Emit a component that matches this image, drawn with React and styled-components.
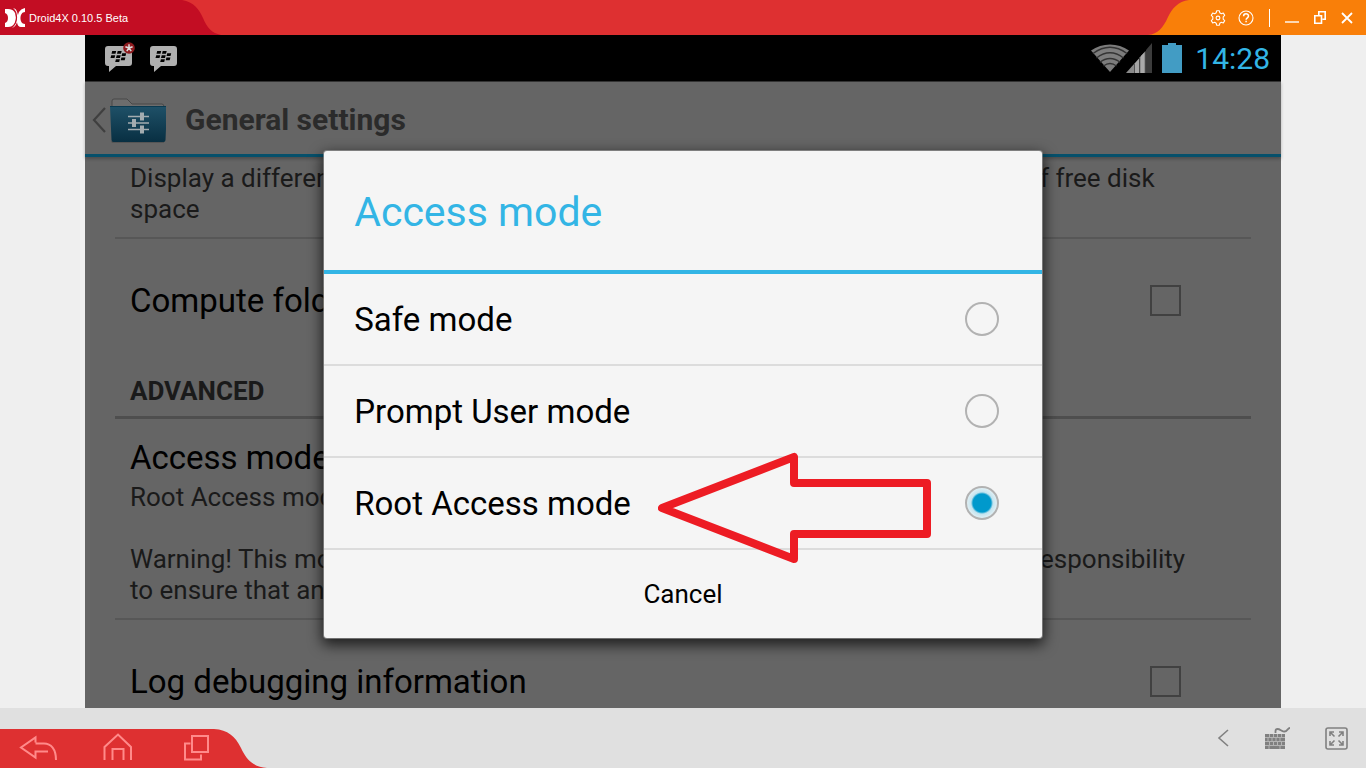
import React, { useState } from "react";
import styled, { createGlobalStyle } from "styled-components";

const colors = {
    crimson: "#c30d23",
    red: "#de3031",
    orange: "#f97f09",
    holo: "#33b5e5",
    dimmed: "#656565",
    bar: "#e0e0e0",
    navIcon: "#ff8a8a",
    toolIcon: "#808080",
};

const accessModes = ["Safe mode", "Prompt User mode", "Root Access mode"];

export default function App() {
    return (
        <Page>
            <GlobalStyle />
            <TitleBar />
            <Stage>
                <Screen>
                    <StatusBar />
                    <SettingsScreen />
                </Screen>
            </Stage>
            <BottomBar />
        </Page>
    )
}

function TitleBar() {
    return (
        <TitleBarWrapper>
            <AppTitle>
                <DroidLogo />
                <h1>Droid4X 0.10.5 Beta</h1>
            </AppTitle>
            <Curve width="40" height="35" viewBox="0 0 40 35">
                <path d="M0 0h1c12 2 17 9 21 18 4 10 9 15 18 17H0z" fill={colors.crimson} />
            </Curve>
            <Spacer />
            <Curve width="42" height="35" viewBox="0 0 42 35">
                <path d="M42 0h-1C30 1 24 9 20 17 15 28 10 34 0 35h42z" fill={colors.orange} />
            </Curve>
            <WindowControls>
                <WindowButton aria-label="Settings">
                    <svg width="16" height="16" viewBox="0 0 16 16" fill="none" stroke="#fff" strokeWidth="1.1">
                        <path d="M6.6.8h2.8l.4 2 1.5.9 2-.7 1.4 2.4-1.5 1.4v2.4l1.5 1.4-1.4 2.4-2-.7-1.5.9-.4 2H6.6l-.4-2-1.5-.9-2 .7-1.4-2.4 1.5-1.4V6.8L1.3 5.4 2.7 3l2 .7 1.5-.9z" strokeLinejoin="round" />
                        <circle cx="8" cy="8" r="1.9" />
                    </svg>
                </WindowButton>
                <WindowButton aria-label="Help">
                    <svg width="16" height="16" viewBox="0 0 16 16" fill="none" stroke="#fff">
                        <circle cx="8" cy="8" r="7" strokeWidth="1.1" />
                        <path d="M5.6 6.2c0-3.2 4.9-3.2 4.9-.2 0 1.8-2.4 1.8-2.4 3.8M8.1 10.8v1.4" strokeWidth="1.5" />
                    </svg>
                </WindowButton>
                <ControlDivider />
                <WindowButton aria-label="Minimize">
                    <svg width="16" height="16" viewBox="0 0 16 16">
                        <path d="M1 12h14" stroke="#fff" strokeWidth="1.4" />
                    </svg>
                </WindowButton>
                <WindowButton aria-label="Restore">
                    <svg width="16" height="16" viewBox="0 0 16 16" fill="none" stroke="#fff" strokeWidth="1.6">
                        <path d="M6.800 5V1.800h6.400v7.400H10.500M2.800 5.800h6.700v7.400H2.800z" />
                    </svg>
                </WindowButton>
                <WindowButton aria-label="Close">
                    <svg width="16" height="16" viewBox="0 0 16 16">
                        <path d="M2 3l10 10M12 3L2 13" stroke="#fff" strokeWidth="1.8" />
                    </svg>
                </WindowButton>
            </WindowControls>
        </TitleBarWrapper>
    )
}

function DroidLogo() {
    return (
        <svg width="20" height="20" viewBox="0 0 20 20" fill="#fff">
            <path d="M0 1h3c6 0 8 4 8 9s-2 9-8 9H0v-4c4-1 4-9 0-10z" />
            <path d="M8 0c4 1 4 4 5 7 1-4 3-6 7-7v4c-6 0-6 12 0 12v3h-4c-2 0-4-2-4-5-1 3-2 5-5 6 6-5 6-12 1-20z" />
            <path d="M7 0c6 4 6 14 0 19" fill="none" stroke={colors.crimson} strokeWidth="1.200" />
        </svg>
    )
}

function BbmIcon({ alert }) {
    return (
        <svg width="30" height="32" viewBox="0 0 30 32">
            <path d="M3 4h21q3 0 3 3v14q0 3-3 3H11l-7 6V24H3q-3 0-3-3V7q0-3 3-3z" fill="#b0b0b0" />
            <path d="M7.200 9h4l-.7 2.800h-4zM12.700 9h4l-.7 2.800h-4zM6.200 13.200h4l-.7 2.800h-4zM11.700 13.200h4l-.7 2.800h-4zM17.200 11.200h4l-.7 2.800h-4zM16.400 15.400h4l-.7 2.800h-4zM10.900 17.200h4l-.7 2.800h-4z" fill="#000" />
            {alert && (
                <g>
                    <circle cx="24" cy="6" r="5.800" fill="#8e1a1e" />
                    <path d="M24 6V2.200M24 6l3.600-1.200M24 6l2.200 3.200M24 6l-2.200 3.200M24 6l-3.600-1.200" stroke="#ddd" strokeWidth="1.500" />
                </g>
            )}
        </svg>
    )
}

function StatusBar() {
    return (
        <StatusBarWrapper>
            <Notifications>
                <BbmIcon alert />
                <BbmIcon />
            </Notifications>
            <Indicators>
                <svg width="62" height="30" viewBox="0 0 62 30">
                    <path d="M0 7.500C11-.500 27-.500 38 7.500L19 29z" fill="#7c7c7c" />
                    <path d="M2 10.500c11-8 23-8 34 0M5.500 15c9-7 18-7 27 0M9 19.200c6-5 14-5 20 0M12.500 23c4-3 9-3 13 0" fill="none" stroke="#333" strokeWidth="1.400" />
                    <path d="M35 30L43 21v9z" fill="#8a8a8a" />
                    <path d="M43.500 20.500l4.500-5V30h-4.500z" fill="#a5a5a5" />
                    <path d="M48.500 14.500l6-6.500v22h-6z" fill="#8f8f8f" />
                    <path d="M50 13l3-3v20h-3z" fill="#aaa" />
                    <path d="M55 7l6-7v30h-6z" fill="#3c3c3c" />
                </svg>
                <svg width="20" height="30" viewBox="0 0 20 30">
                    <path d="M6 0h8v2h6v28H0V2h6z" fill="#429cc4" />
                </svg>
                <Clock>14:28</Clock>
            </Indicators>
        </StatusBarWrapper>
    )
}

function SettingsScreen() {
    return (
        <Content>
            <ActionBar>
                <svg width="14" height="26" viewBox="0 0 14 26">
                    <path d="M13 1L2 13l11 12" fill="none" stroke="#3f3f3f" strokeWidth="2.200" />
                </svg>
                <FolderIcon />
                <h2>General settings</h2>
            </ActionBar>
            <SettingsList>
                <SettingItem $scrolled>
                    <SettingName>Disk images</SettingName>
                    <SettingText>
                        Display a different disk icon in this folder list depending on the actual amount of free disk space
                    </SettingText>
                </SettingItem>
                <CheckItem>
                    <span>Compute folder size</span>
                    <CheckBox />
                </CheckItem>
                <SectionHeader>ADVANCED</SectionHeader>
                <SettingItem>
                    <SettingName>Access mode</SettingName>
                    <SettingText>Root Access mode</SettingText>
                    <SettingText $spaced>
                        Warning! This mode may damage important files on the system. It will be your responsibility
                        to ensure that any changes are safe.
                    </SettingText>
                </SettingItem>
                <CheckItem>
                    <span>Log debugging information</span>
                    <CheckBox />
                </CheckItem>
            </SettingsList>
            <Overlay>
                <AccessDialog />
            </Overlay>
        </Content>
    )
}

function FolderIcon() {
    return (
        <svg width="60" height="48" viewBox="0 0 60 48">
            <defs>
                <linearGradient id="folder" x1="0" y1="0" x2="0" y2="1">
                    <stop offset="0" stopColor="#1f5168" />
                    <stop offset="1" stopColor="#082f42" />
                </linearGradient>
            </defs>
            <path d="M6 11V5q0-2 2-2h13l5 5h30q2 0 2 3" fill="#6d6d6d" stroke="#484848" />
            <path d="M5 45h53v2H6z" fill="#555" />
            <path d="M4 10h57l-1.500 34q0 2-2 2h-50q-2 0-2-2z" fill="url(#folder)" />
            <path d="M4 10.500h57" stroke="#0b3a50" />
            <path d="M22 20.500h21M22 27h21M22 33.500h21" stroke="#a3acb0" strokeWidth="1.500" />
            <path d="M36 16.500v8M28 23v8M36 29.500v8" stroke="#a3acb0" strokeWidth="4" />
        </svg>
    )
}

function AccessDialog() {
    const [mode, setMode] = useState("Root Access mode");

    return (
        <Dialog role="dialog" aria-labelledby="dialog-title">
            <DialogTitle id="dialog-title">Access mode</DialogTitle>
            {accessModes.map(name => (
                <Option key={name}>
                    <span>{name}</span>
                    <Radio name="access" checked={mode === name} onChange={() => setMode(name)} />
                </Option>
            ))}
            <CancelButton>Cancel</CancelButton>
            <Pointer width="274" height="112" viewBox="0 0 274 112">
                <path d="M4 56L136 5v26h133v51H136v25z" fill="none" stroke="#ed1c24" strokeWidth="8" strokeLinejoin="round" />
            </Pointer>
        </Dialog>
    )
}

function BottomBar() {
    return (
        <BottomBarWrapper>
            <NavTab>
                <NavButton aria-label="Back">
                    <svg width="38" height="28" viewBox="0 0 38 28">
                        <path d="M16.500 9.500V4.500L2 14.500l14.500 10V18.500H29M16.500 10.500H25C32 10.500 37 16 37 27" />
                    </svg>
                </NavButton>
                <NavButton aria-label="Home">
                    <svg width="30" height="28" viewBox="0 0 30 28">
                        <path d="M2.500 27V14L16 1.500 29 14V27M10.500 27V16h11v11" />
                    </svg>
                </NavButton>
                <NavButton aria-label="Recent apps">
                    <svg width="26" height="28" viewBox="0 0 26 28">
                        <path d="M9 3h16v16H9zM7.500 10.500H2v16h16v-5" />
                    </svg>
                </NavButton>
            </NavTab>
            <Curve width="53" height="39" viewBox="0 0 53 39">
                <path d="M0 0c14 1 21 7 27 19 5 11 12 19 26 20H0z" fill={colors.red} />
            </Curve>
            <Spacer />
            <Tools>
                <ToolButton aria-label="Collapse">
                    <svg width="12" height="18" viewBox="0 0 12 18" fill="none" stroke={colors.toolIcon} strokeWidth="1.600">
                        <path d="M11 1L2 9l9 8" />
                    </svg>
                </ToolButton>
                <ToolButton aria-label="Keyboard">
                    <svg width="26" height="22" viewBox="0 0 26 22">
                        <path d="M11.500 6V4q0-2 2-2c3 0 4 3 7 2.500 3 0 3-3.500 5.500-3.500" fill="none" stroke={colors.toolIcon} strokeWidth="1.800" />
                        <path d="M1 7h20v15H1z" fill={colors.toolIcon} />
                        <path d="M1 10.500h20M1 14.500h20M1 18.500h20M5.500 7v3M9.500 7v3M13.500 7v3M17.500 7v3M4 11v3M8 11v3M12 11v3M16 11v3M5.500 15v3M9.500 15v3M13.500 15v3M17.500 15v3M5 19v3M16 19v3" stroke="#b4b4b4" strokeWidth="1" />
                    </svg>
                </ToolButton>
                <ToolButton aria-label="Full screen">
                    <svg width="23" height="23" viewBox="0 0 23 23" fill="none" stroke={colors.toolIcon}>
                        <rect x="1" y="1" width="21" height="21" rx="2" strokeWidth="1.600" />
                        <path d="M9.500 9.500l-4-4M5 9V5h4M13.500 9.500l4-4M14 5h4v4M9.500 13.500l-4 4M5 14v4h4M13.500 13.500l4 4M14 18h4v-4" strokeWidth="1.600" />
                    </svg>
                </ToolButton>
            </Tools>
        </BottomBarWrapper>
    )
}

const GlobalStyle = createGlobalStyle`
* {
    box-sizing: border-box;
}

body, h1, h2, h3, p {
    margin: 0;
}

body {
    font-family: Roboto, sans-serif;
    background-color: #efefef;
}

button {
    padding: 0;
    border: 0;
    background: none;
    font-family: inherit;
    cursor: pointer;
}

svg {
    display: block;
    flex: none;
}
`

const Page = styled.div`
display: flex;
flex-direction: column;
height: 100vh;
overflow: hidden;
`

const Spacer = styled.div`
flex: 1;
`

const Curve = styled.svg``

const TitleBarWrapper = styled.header`
display: flex;
flex: none;
height: 35px;
background-color: ${colors.red};
`

const AppTitle = styled.div`
display: flex;
align-items: center;
gap: 4px;
width: 181px;
padding-left: 5px;
background-color: ${colors.crimson};
color: #fff;

h1 {
    font: 11px "Liberation Sans", sans-serif;
    white-space: nowrap;
}
`

const WindowControls = styled.div`
display: flex;
align-items: center;
gap: 12px;
padding: 0 10px 0 20px;
background-color: ${colors.orange};
`

const WindowButton = styled.button`
width: 16px;
height: 16px;
`

const ControlDivider = styled.div`
width: 1px;
height: 18px;
margin: 0 2px 0 3px;
background-color: #fff;
`

const Stage = styled.main`
display: flex;
flex: 1;
min-height: 0;
padding: 0 85px;
`

const Screen = styled.div`
display: flex;
flex-direction: column;
flex: 1;
background-color: ${colors.dimmed};
`

const StatusBarWrapper = styled.div`
display: flex;
flex: none;
align-items: center;
justify-content: space-between;
height: 46px;
padding: 0 11px 0 20px;
background-color: #000;
`

const Notifications = styled.div`
display: flex;
gap: 15px;
`

const Indicators = styled.div`
display: flex;
align-items: center;
gap: 9px;
`

const Clock = styled.time`
margin-left: 4px;
font-size: 30px;
color: ${colors.holo};
`

const Content = styled.section`
position: relative;
display: flex;
flex: 1;
flex-direction: column;
min-height: 0;
`

const ActionBar = styled.div`
display: flex;
flex: none;
align-items: center;
height: 76px;
padding: 3px 0 0 7px;
border-top: 1px solid #333;
border-bottom: 3px solid #06506b;
box-shadow: 0 2px 3px rgba(0, 0, 0, 0.25);

h2 {
    margin-left: 19px;
    font-size: 30px;
    font-weight: 700;
    color: #2b2b2b;
}
`

const SettingsList = styled.div`
flex: 1;
min-height: 0;
padding: 0 30px;
overflow: hidden;
`

const SettingItem = styled.div`
margin-top: ${props => props.$scrolled ? '-57px' : '0'};
padding: 19px 45px 12px 15px;
border-bottom: 2px solid #575757;
`

const SettingName = styled.h3`
margin-bottom: 4px;
font-size: 33px;
font-weight: 400;
line-height: 40px;
color: #000;
`

const SettingText = styled.p`
margin-top: ${props => props.$spaced ? '31px' : '0'};
font-size: 26px;
line-height: 31px;
color: #1a1a1a;
`

const CheckItem = styled.label`
display: flex;
align-items: center;
justify-content: space-between;
height: 122px;
padding: 0 70px 0 15px;
font-size: 33px;
color: #000;
`

const CheckBox = styled.input.attrs({ type: "checkbox" })`
appearance: none;
width: 31px;
height: 31px;
margin: 0;
border: 2px solid #414141;
`

const SectionHeader = styled.h3`
height: 58px;
padding: 0 15px;
border-bottom: 3px solid #4e4e4e;
font-size: 26px;
font-weight: 700;
line-height: 60px;
color: #1a1a1a;
`

const Overlay = styled.div`
position: absolute;
inset: 0;
z-index: 2;
display: flex;
align-items: center;
justify-content: center;
`

const Dialog = styled.div`
position: relative;
display: flex;
flex-direction: column;
width: 60%;
border-radius: 3px;
background-color: #f5f5f5;
box-shadow: 0 0 0 1px rgba(160, 160, 160, 0.6), 0 5px 14px 2px rgba(0, 0, 0, 0.7);
color: #000;
`

const DialogTitle = styled.h2`
height: 123px;
padding-left: 30px;
border-bottom: 4px solid ${colors.holo};
font-size: 41px;
font-weight: 400;
line-height: 122px;
color: ${colors.holo};
`

const Option = styled.label`
display: flex;
align-items: center;
justify-content: space-between;
height: 92px;
padding: 0 43px 0 30px;
border-bottom: 2px solid #dcdcdc;
font-size: 33px;
`

const Radio = styled.input.attrs({ type: "radio" })`
appearance: none;
width: 34px;
height: 34px;
margin: 0;
border: 2px solid #b2b2b2;
border-radius: 50%;

&:checked {
    background: radial-gradient(circle, #0099cc 9px, #c4e4ef 11px, #e0eff4 15px);
}
`

const CancelButton = styled.button`
height: 88px;
font-size: 26px;
color: #000;
`

const Pointer = styled.svg`
position: absolute;
right: 110px;
bottom: 74px;
pointer-events: none;
`

const BottomBarWrapper = styled.footer`
display: flex;
flex: none;
align-items: flex-end;
height: 60px;
background-color: ${colors.bar};
`

const NavTab = styled.nav`
display: flex;
align-items: center;
gap: 43px;
height: 39px;
padding: 0 0 4px 20px;
background-color: ${colors.red};
`

const NavButton = styled.button`
display: flex;
justify-content: center;
width: 36px;

path {
    fill: none;
    stroke: ${colors.navIcon};
    stroke-width: 2px;
}
`

const Tools = styled.div`
display: flex;
align-items: center;
gap: 35px;
height: 60px;
padding-right: 18px;
`

const ToolButton = styled.button``
